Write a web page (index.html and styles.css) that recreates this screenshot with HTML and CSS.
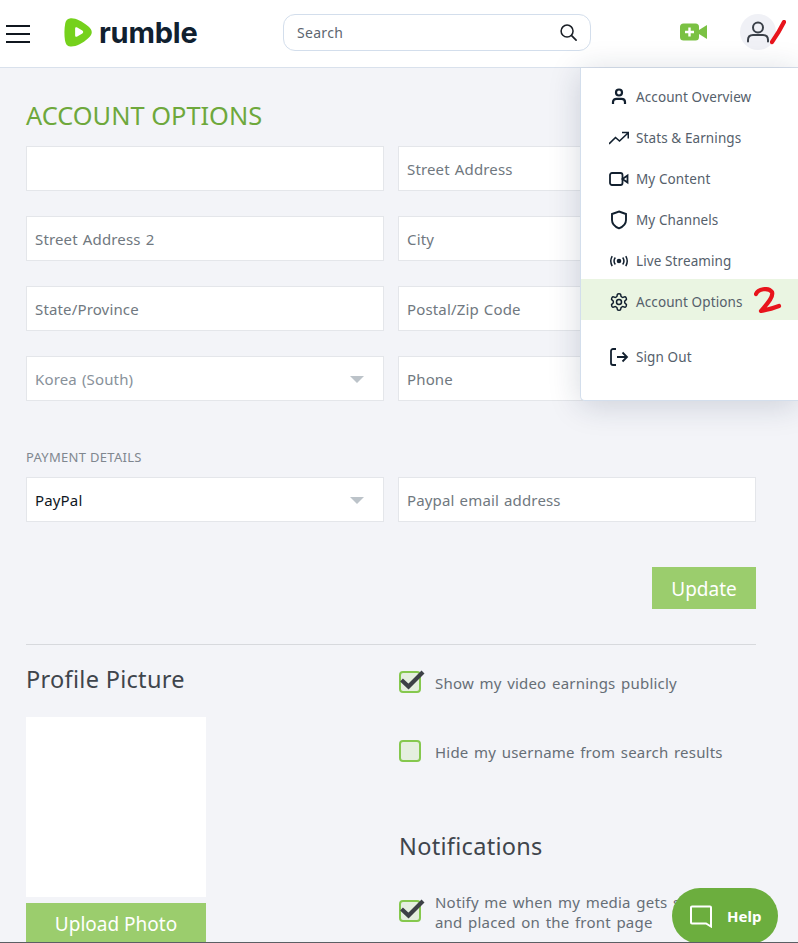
FILE: index.html
```html
<!DOCTYPE html>
<html lang="en">
<head>
<meta charset="utf-8">
<title>Account Options - Rumble</title>
<link rel="stylesheet" href="styles.css">
</head>
<body>
<header class="topbar">
  <svg class="burger" viewBox="0 0 24 18" width="24" height="18"><path d="M0 1h24M0 9h24M0 17h24" stroke="#10171f" stroke-width="2"/></svg>
  <div class="logo">
    <svg class="logo-mark" viewBox="0 0 30 32" width="29" height="31"><path d="M6 1.500C11 .5 18 4 25 9.500c5 4 5 8.500 0 12.500-6 5.500-13 9-18.500 8.500C3 30 1.800 28 1 24 .2 19 .2 12 1.300 6.500 1.800 3.500 3.500 2 6 1.500Z" fill="#75d11c"/><path d="M11.500 12c0-1.300 1-1.800 2.200-1.100l5.300 3.100c1.200.7 1.200 2.300 0 3l-5.300 3.100c-1.200.7-2.200.2-2.200-1.100Z" fill="#fff"/></svg>
    <span class="logo-text">rumble</span>
  </div>
  <div class="search">
    <span class="search-label">Search</span>
    <svg viewBox="0 0 20 20" width="19" height="19"><circle cx="8.500" cy="8.500" r="6.300" fill="none" stroke="#1a1f26" stroke-width="1.600"/><path d="M13.300 13.300 18 18" stroke="#1a1f26" stroke-width="1.800" stroke-linecap="round"/></svg>
  </div>
  <svg class="upload" viewBox="0 0 28 18" width="28" height="18"><rect x="0" y="0.500" width="19" height="17" rx="3.500" fill="#7ac143"/><path d="M19 7l8-5v14l-8-5Z" fill="#7ac143"/><path d="M9.500 4.500v9M5 9h9" stroke="#fff" stroke-width="2.400"/></svg>
  <div class="avatar">
    <svg viewBox="0 0 24 24" width="24" height="24"><circle cx="12" cy="7.500" r="5" fill="none" stroke="#3a4048" stroke-width="2"/><path d="M2 21.500v-1.500c0-3 2-5 5-5h10c3 0 5 2 5 5v1.500" fill="none" stroke="#3a4048" stroke-width="2" stroke-linecap="round"/></svg>
    <svg class="mark-one" viewBox="0 0 16 26" width="16" height="26"><path d="M14 2C11 8 7 15 2 22" stroke="#e8141c" stroke-width="4.200" stroke-linecap="round" fill="none"/></svg>
  </div>
</header>

<main class="page">
  <h1 class="title">ACCOUNT OPTIONS</h1>
  <form class="fields">
    <div class="field"></div>
    <div class="field">Street Address</div>
    <div class="field">Street Address 2</div>
    <div class="field">City</div>
    <div class="field">State/Province</div>
    <div class="field">Postal/Zip Code</div>
    <div class="field select muted">Korea (South)<span class="caret"></span></div>
    <div class="field">Phone</div>
  </form>
  <div class="section-label">PAYMENT DETAILS</div>
  <div class="fields">
    <div class="field select dark">PayPal<span class="caret"></span></div>
    <div class="field">Paypal email address</div>
  </div>
  <div class="actions"><button class="btn update" type="button">Update</button></div>
  <hr class="rule">
  <div class="lower">
    <section class="profile">
      <h2 class="heading">Profile Picture</h2>
      <div class="photo"></div>
      <button class="btn upload-photo" type="button">Upload Photo</button>
    </section>
    <section class="prefs">
      <label class="check first"><span class="box"><svg class="tick" viewBox="0 0 26 22" width="26" height="22"><path d="M2.500 11l7 6.500L24 3" fill="none" stroke="#3d4146" stroke-width="4.200"/></svg></span><span>Show my video earnings publicly</span></label>
      <label class="check second"><span class="box"></span><span>Hide my username from search results</span></label>
      <h2 class="heading notif">Notifications</h2>
      <label class="check third"><span class="box"><svg class="tick" viewBox="0 0 26 22" width="26" height="22"><path d="M2.500 11l7 6.500L24 3" fill="none" stroke="#3d4146" stroke-width="4.200"/></svg></span><span>Notify me when my media gets selected<br>and placed on the front page</span></label>
    </section>
  </div>
</main>

<nav class="menu">
  <a class="item"><svg viewBox="0 0 20 20" width="20" height="20"><circle cx="10" cy="5.500" r="3" fill="none" stroke="#12202f" stroke-width="2.200"/><path d="M4 17v-2c0-2 1.500-3.200 3.500-3.200h5c2 0 3.500 1.200 3.500 3.200v2" fill="none" stroke="#12202f" stroke-width="2.200"/></svg>Account Overview</a>
  <a class="item"><svg viewBox="0 0 20 20" width="20" height="20"><path d="M0 16l6.500-6.500 4 3.500L19 5M13 4.500h6.300v6" fill="none" stroke="#12202f" stroke-width="1.600"/></svg>Stats &amp; Earnings</a>
  <a class="item"><svg viewBox="0 0 20 20" width="20" height="20"><rect x="1" y="4" width="12.500" height="12" rx="2" fill="none" stroke="#12202f" stroke-width="1.800"/><path d="M13.500 10l5-3.500v7z" fill="none" stroke="#12202f" stroke-width="1.800"/></svg>My Content</a>
  <a class="item"><svg viewBox="0 0 20 20" width="20" height="20"><path d="M10 1.500l7 2.500v6c0 4-3 6.800-7 8.300-4-1.500-7-4.300-7-8.300V4Z" fill="none" stroke="#12202f" stroke-width="1.900"/></svg>My Channels</a>
  <a class="item"><svg viewBox="0 0 20 20" width="20" height="20"><circle cx="10" cy="10" r="2.300" fill="#12202f"/><path d="M6.300 6.500a6 6 0 0 0 0 7M13.700 6.500a6 6 0 0 1 0 7M3.200 5a10 10 0 0 0 0 10M16.800 5a10 10 0 0 1 0 10" fill="none" stroke="#12202f" stroke-width="1.500"/></svg>Live Streaming</a>
  <a class="item active"><svg viewBox="0 0 24 24" width="20" height="20"><path d="M12.200 2h-.4a2 2 0 0 0-2 2v.2a2 2 0 0 1-1 1.700l-.4.300a2 2 0 0 1-2 0l-.2-.1a2 2 0 0 0-2.700.7l-.2.400a2 2 0 0 0 .7 2.700l.2.100a2 2 0 0 1 1 1.700v.6a2 2 0 0 1-1 1.700l-.2.100a2 2 0 0 0-.7 2.700l.2.400a2 2 0 0 0 2.700.7l.2-.1a2 2 0 0 1 2 0l.4.300a2 2 0 0 1 1 1.700v.2a2 2 0 0 0 2 2h.4a2 2 0 0 0 2-2v-.2a2 2 0 0 1 1-1.700l.4-.3a2 2 0 0 1 2 0l.2.100a2 2 0 0 0 2.700-.7l.2-.4a2 2 0 0 0-.7-2.700l-.2-.1a2 2 0 0 1-1-1.700v-.6a2 2 0 0 1 1-1.700l.2-.1a2 2 0 0 0 .7-2.700l-.2-.4a2 2 0 0 0-2.700-.7l-.2.100a2 2 0 0 1-2 0l-.4-.3a2 2 0 0 1-1-1.700V4a2 2 0 0 0-2-2Z" fill="none" stroke="#12202f" stroke-width="1.800"/><circle cx="12" cy="12" r="3" fill="none" stroke="#12202f" stroke-width="1.800"/></svg>Account Options
    <svg class="mark-two" viewBox="0 0 28 26" width="28" height="26"><path d="M2 7C4 2 14 0 18 5 20 11 10 20 7 24 12 23 20 21 25 19" fill="none" stroke="#e8141c" stroke-width="4.200" stroke-linecap="round" stroke-linejoin="round"/></svg>
  </a>
  <a class="item out"><svg viewBox="0 0 20 20" width="20" height="20"><path d="M7 2H4a2 2 0 0 0-2 2v12a2 2 0 0 0 2 2h3M8 10h10M13.500 5.500 18 10l-4.500 4.500" fill="none" stroke="#12202f" stroke-width="1.800"/></svg>Sign Out</a>
</nav>

<button class="help" type="button"><svg viewBox="0 0 24 24" width="24" height="24"><path d="M3 2.500h18a1 1 0 0 1 1 1v19l-5-3H3a1 1 0 0 1-1-1v-15a1 1 0 0 1 1-1Z" fill="none" stroke="#fff" stroke-width="2"/></svg>Help</button>
<div class="edge"></div>
</body>
</html>
```

FILE: styles.css
```css
* { box-sizing: border-box; }
html, body { margin: 0; height: 943px; overflow: hidden; }
body { position: relative; background: #f3f4f8; font-family: "Noto Sans", "Open Sans", sans-serif; color: #5d6670; }

.topbar { height: 68px; background: #fff; border-bottom: 1px solid #d9e1ec; display: flex; align-items: center; padding-left: 6px; }
.burger { flex: none; }
.logo { display: flex; align-items: center; margin: -2px 0 0 34px; width: 219px; }
.logo-mark { flex: none; }
.logo-text { font-family: "Inter", sans-serif; font-weight: 700; font-size: 29px; letter-spacing: -0.2px; color: #10202f; margin-left: 6px; line-height: 1; }
.search { width: 308px; height: 37px; border: 1px solid #d3deec; border-radius: 12px; display: flex; align-items: center; justify-content: space-between; padding: 0 12px 0 13px; margin-top: -3px; }
.search-label { font-size: 14px; color: #5d6670; letter-spacing: .3px; }
.upload { margin-left: 89px; margin-top: -3px; flex: none; }
.avatar { position: relative; width: 36px; height: 36px; border-radius: 50%; background: #f0f1f6; margin-left: 32px; margin-top: -3px; display: flex; align-items: center; justify-content: center; }
.mark-one { position: absolute; left: 30px; top: 6px; }

.page { padding: 0 42px 0 26px; }
.title { margin: 0; padding-top: 30px; height: 78px; font-size: 25.400px; line-height: 34px; font-weight: 400; color: #6ea83c; }
.fields { display: grid; grid-template-columns: 358px 358px; column-gap: 14px; row-gap: 25px; }
.field { height: 45px; background: #fff; border: 1px solid #e4e6ea; padding: 0 8px; font-size: 15px; line-height: 44px; color: #707880; position: relative; letter-spacing: .15px; word-spacing: 1px; }
.select.muted { color: #88919a; }
.select.dark { color: #10171f; }
.caret { position: absolute; right: 19px; top: 19px; width: 0; height: 0; border-left: 7px solid transparent; border-right: 7px solid transparent; border-top: 7px solid #bcc3c9; }
.section-label { margin-top: 46px; height: 30px; font-size: 13px; line-height: 20px; color: #80878f; letter-spacing: .3px; }
.actions { display: flex; justify-content: flex-end; margin-top: 45px; }
.btn { border: 0; background: #9bcd6d; color: #fff; font-family: inherit; font-size: 19px; padding: 2px 0 0; }
.update { width: 104px; height: 42px; }
.rule { margin: 35px 0 0; border: 0; border-top: 1px solid #d7d9dd; }
.lower { display: grid; grid-template-columns: 358px 358px; column-gap: 15px; }
.heading { margin: 0; font-size: 23.500px; line-height: 34px; font-weight: 400; color: #3f454c; letter-spacing: .3px; }
.profile { padding-top: 17px; }
.photo { width: 180px; height: 180px; background: #fff; margin-top: 21px; }
.upload-photo { display: block; width: 180px; height: 40px; margin-top: 6px; }
.prefs { padding-top: 28px; }
.check { display: flex; align-items: center; gap: 14px; font-size: 15px; line-height: 20px; color: #666e76; letter-spacing: .2px; word-spacing: 1.500px; }
.box { position: relative; flex: none; width: 22px; height: 22px; margin-top: -3px; border: 2px solid #85c84e; border-radius: 4px; background: #e5efdf; }
.tick { position: absolute; left: -2px; top: -4px; }
.second { margin-top: 49px; }
.notif { margin-top: 67px; }
.third { margin-top: 29px; }

.menu { position: absolute; left: 580px; top: 68px; width: 218px; height: 333px; background: #fff; border-left: 1px solid #d3deec; border-bottom: 1px solid #d3deec; border-radius: 0 0 0 5px; box-shadow: 0 4px 32px rgba(20,40,70,.18); padding-top: 6px; display: flex; flex-direction: column; }
.item { position: relative; flex: none; height: 41px; display: flex; align-items: center; gap: 7px; padding: 4px 0 0 28px; font-size: 13.500px; color: #55606b; letter-spacing: .1px; }
.item svg { flex: none; }
.active { background: #eaf5e2; }
.out { margin-top: 14px; }
.item .mark-two { position: absolute; left: 173px; top: 8px; }

.help { position: absolute; left: 672px; top: 888px; width: 106px; height: 56px; border: 0; border-radius: 28px; background: #6cae3e; color: #fff; display: flex; align-items: center; gap: 14px; padding: 0 0 0 17px; font-family: "Noto Sans", sans-serif; font-size: 15px; font-weight: 700; }
.edge { position: absolute; left: 0; right: 0; bottom: 0; height: 1px; background: #5b5f64; }
```
